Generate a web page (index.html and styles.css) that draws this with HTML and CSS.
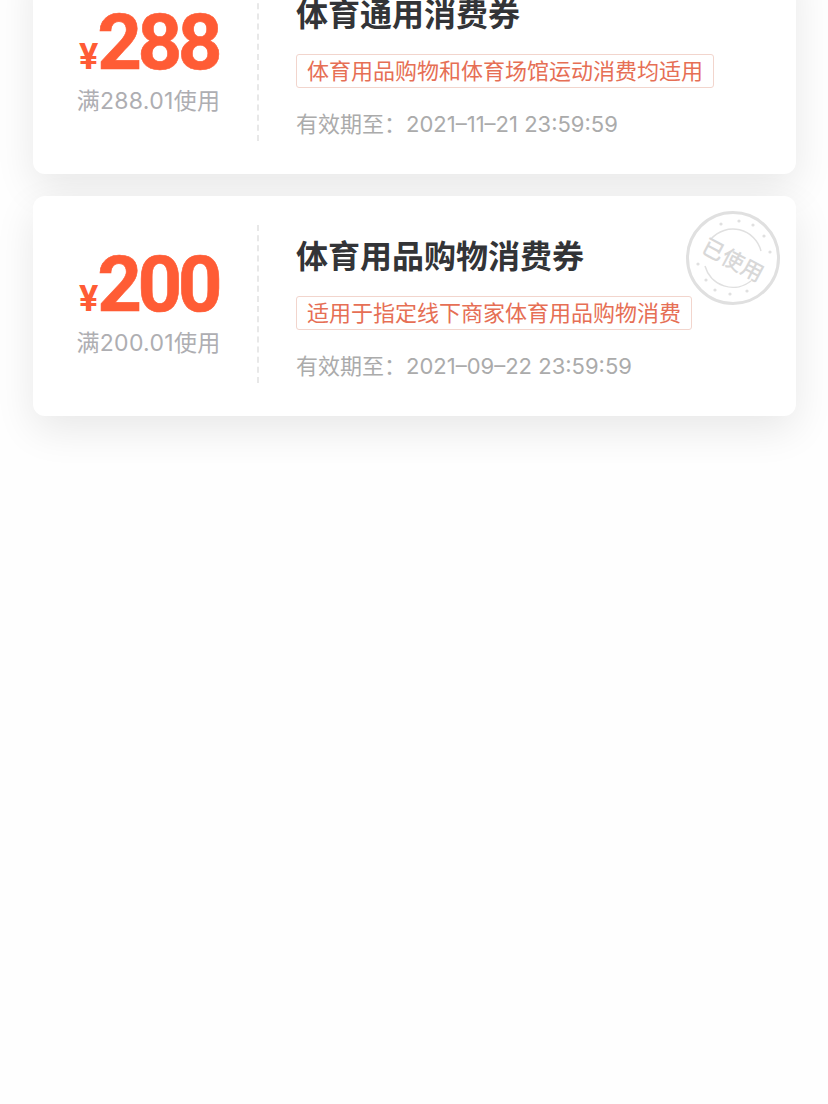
FILE: index.html
```html
<!DOCTYPE html>
<html lang="zh-CN">
<head>
    <meta charset="UTF-8">
    <meta name="viewport" content="width=device-width, initial-scale=1.0">
    <title>消费券</title>
    <link rel="stylesheet" href="styles.css">
</head>
<body>
    <div class="coupon-list">
        <div class="coupon">
            <div class="price-box">
                <div class="price"><span class="yen">¥</span>288</div>
                <div class="limit">满288.01使用</div>
            </div>
            <div class="info">
                <div class="title">体育通用消费券</div>
                <div class="tag">体育用品购物和体育场馆运动消费均适用</div>
                <div class="date">有效期至：<span>2021–11–21 23:59:59</span></div>
            </div>
        </div>

        <div class="coupon">
            <div class="price-box">
                <div class="price"><span class="yen">¥</span>200</div>
                <div class="limit">满200.01使用</div>
            </div>
            <div class="info">
                <div class="title">体育用品购物消费券</div>
                <div class="tag">适用于指定线下商家体育用品购物消费</div>
                <div class="date">有效期至：<span>2021–09–22 23:59:59</span></div>
            </div>
            <svg class="stamp" width="96" height="96" viewBox="0 0 96 96">
                <circle class="stamp-ring" cx="48" cy="48" r="45.5"></circle>
                <path class="stamp-arc" d="M 26 29 A 29 29 0 0 1 76 41"></path>
                <path class="stamp-arc" d="M 20 56 A 29 29 0 0 0 66 71"></path>
                <g class="stamp-dots">
                    <circle cx="36" cy="14" r="1.6"></circle>
                    <circle cx="54" cy="11" r="1.6"></circle>
                    <circle cx="68" cy="15" r="1.6"></circle>
                    <circle cx="79" cy="26" r="1.6"></circle>
                    <circle cx="85" cy="42" r="1.6"></circle>
                    <circle cx="13" cy="54" r="1.6"></circle>
                    <circle cx="21" cy="70" r="1.6"></circle>
                    <circle cx="30" cy="80" r="1.6"></circle>
                    <circle cx="45" cy="84" r="1.6"></circle>
                    <circle cx="62" cy="81" r="1.6"></circle>
                </g>
                <text class="stamp-text" x="48" y="58" text-anchor="middle" transform="rotate(28 48 50)">已使用</text>
            </svg>
        </div>
    </div>
</body>
</html>
```

FILE: styles.css
```css
html, body {
    height: 1104px;
    overflow: hidden;
}

body {
    margin: 0;
    background-color: #fefefe;
    font-family: Inter, "Noto Sans CJK SC", sans-serif;
}

.coupon-list {
    margin-top: -46px;
    padding: 0 32px 0 33px;
    display: flex;
    flex-direction: column;
    gap: 22px;
}

.coupon {
    position: relative;
    height: 220px;
    display: flex;
    align-items: center;
    background-color: #fff;
    border-radius: 12px;
    box-shadow: 0 14px 40px rgba(0, 0, 0, 0.09);
}

.price-box {
    width: 226px;
    height: 158px;
    margin-top: -4px;
    padding-left: 7px;
    box-sizing: border-box;
    border-right: 2px dashed #e8e8e8;
    display: flex;
    flex-direction: column;
    align-items: center;
}

.price {
    margin-top: 22px;
    height: 76px;
    display: flex;
    align-items: baseline;
    font-family: Roboto, sans-serif;
    font-size: 78px;
    line-height: 76px;
    font-weight: 700;
    letter-spacing: -4.5px;
    -webkit-text-stroke: 0.6px #ff5c35;
    color: #ff5c35;
}

.yen {
    margin-right: -1px;
    font-size: 36px;
    letter-spacing: 0;
    -webkit-text-stroke: 0;
}

.limit {
    margin-top: 5px;
    font-size: 23px;
    line-height: 30px;
    letter-spacing: 0.3px;
    color: #aeaeb2;
}

.info {
    padding-top: 7px;
    padding-left: 37px;
    display: flex;
    flex-direction: column;
    align-items: flex-start;
}

.title {
    font-size: 32px;
    line-height: 44px;
    font-weight: 700;
    color: #333437;
}

.tag {
    box-sizing: border-box;
    margin-top: 17px;
    height: 34px;
    padding: 0 10px;
    border: 1px solid #f2d5cd;
    border-radius: 3px;
    font-size: 22px;
    line-height: 32px;
    color: #e66f55;
}

.date {
    margin-top: 18px;
    font-size: 22px;
    line-height: 36px;
    color: #ababab;
}

.stamp {
    position: absolute;
    top: 14px;
    right: 15px;
}

.stamp-ring {
    fill: none;
    stroke: #e0e0e0;
    stroke-width: 3;
}

.stamp-arc {
    fill: none;
    stroke: #e0e0e0;
    stroke-width: 1.5;
}

.stamp-dots {
    fill: #e0e0e0;
}

.stamp-text {
    font-size: 22px;
    font-weight: 500;
    fill: #d8d8d8;
}
```
